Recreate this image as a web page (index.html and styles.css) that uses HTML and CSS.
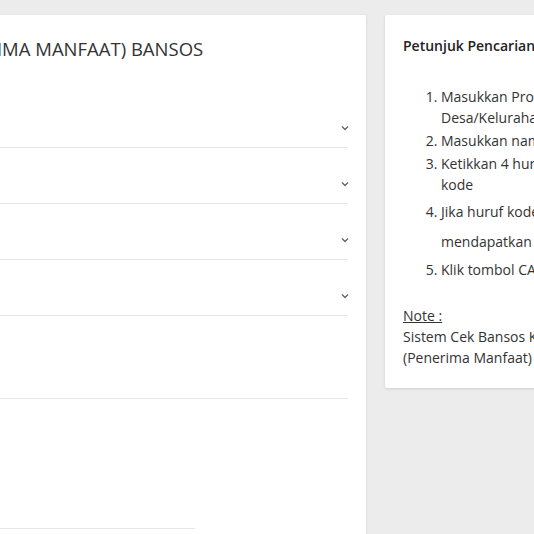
FILE: index.html
```html
<!DOCTYPE html>
<html lang="id">
<head>
    <meta charset="UTF-8">
    <meta name="viewport" content="width=device-width, initial-scale=1.0">
    <title>Cek Bansos</title>
    <link rel="stylesheet" href="styles.css">
</head>
<body>
    <div class="page">
        <div class="card form-card">
            <h2 class="form-title">CEK DATA PM (PENERIMA MANFAAT) BANSOS</h2>

            <div class="field select">
                <span class="value">Provinsi</span>
                <svg class="caret" width="8" height="6" viewBox="0 0 8 6"><polyline points="1,1.5 4,4.5 7,1.5" fill="none" stroke="#666" stroke-width="1.4"/></svg>
            </div>
            <div class="field select">
                <span class="value">Kabupaten</span>
                <svg class="caret" width="8" height="6" viewBox="0 0 8 6"><polyline points="1,1.5 4,4.5 7,1.5" fill="none" stroke="#666" stroke-width="1.4"/></svg>
            </div>
            <div class="field select">
                <span class="value">Kecamatan</span>
                <svg class="caret" width="8" height="6" viewBox="0 0 8 6"><polyline points="1,1.5 4,4.5 7,1.5" fill="none" stroke="#666" stroke-width="1.4"/></svg>
            </div>
            <div class="field select">
                <span class="value">Desa</span>
                <svg class="caret" width="8" height="6" viewBox="0 0 8 6"><polyline points="1,1.5 4,4.5 7,1.5" fill="none" stroke="#666" stroke-width="1.4"/></svg>
            </div>
            <div class="field name"></div>
            <div class="captcha-row">
                <div class="field captcha"></div>
            </div>
        </div>

        <div class="card help-card">
            <h3 class="help-title">Petunjuk Pencarian</h3>
            <ol class="steps">
                <li>Masukkan Provinsi, Kabupaten, Kecamatan dan<br>Desa/Kelurahan</li>
                <li>Masukkan nama PM (Penerima Manfaat)</li>
                <li>Ketikkan 4 huruf yang tertera pada kotak<br>kode</li>
                <li class="tall">Jika huruf kode kurang jelas, klik ikon untuk<br>mendapatkan kode baru</li>
                <li>Klik tombol CARI DATA</li>
            </ol>
            <p class="note"><u>Note :</u><br>Sistem Cek Bansos Kemensos menampilkan data PM<br>(Penerima Manfaat) sesuai wilayah yang dipilih</p>
        </div>
    </div>
</body>
</html>
```

FILE: styles.css
```css
html, body {
    margin: 0;
    overflow: hidden;
}
body {
    background: #ececec;
    font-family: "Open Sans", "Noto Sans", sans-serif;
    color: #333;
}
.page {
    display: flex;
    align-items: flex-start;
    gap: 19px;
    padding-top: 15px;
    margin-left: -212px;
    width: 1200px;
}
.card {
    background: #fff;
    border-radius: 2px;
    box-shadow: 0 1px 3px rgba(0, 0, 0, 0.12);
}
.form-card {
    width: 578px;
    padding: 0 18px 40px 24px;
    box-sizing: border-box;
    min-height: 600px;
}
.form-title {
    margin: 0;
    padding-top: 21px;
    height: 77px;
    box-sizing: border-box;
    font-size: 18.5px;
    font-weight: 400;
    color: #333;
    white-space: nowrap;
}
.field {
    display: flex;
    align-items: flex-end;
    justify-content: space-between;
    border-bottom: 1px solid #e6e6e6;
    box-sizing: border-box;
    font-size: 13px;
}
.field .value {
    visibility: hidden;
}
.select {
    height: 56px;
}
.select .caret {
    margin: 0 -1px 16px 0;
}
.name {
    height: 83px;
}
.captcha-row {
    padding-top: 129px;
}
.captcha {
    width: 383px;
}
.help-card {
    width: 420px;
    padding: 22px 18px 20px;
    box-sizing: border-box;
    white-space: nowrap;
}
.help-title {
    margin: 0 0 31px;
    font-size: 14px;
    line-height: 18px;
    font-weight: 600;
    color: #222;
}
.steps {
    margin: 0;
    padding-left: 38px;
    font-size: 14px;
    color: #333;
}
.steps li {
    line-height: 21px;
    margin-bottom: 2px;
}
.steps li.tall {
    line-height: 30px;
}
.steps li:last-child {
    margin-bottom: 0;
}
.note {
    margin: 25px 0 0;
    font-size: 14px;
    line-height: 21px;
    color: #333;
}
```
